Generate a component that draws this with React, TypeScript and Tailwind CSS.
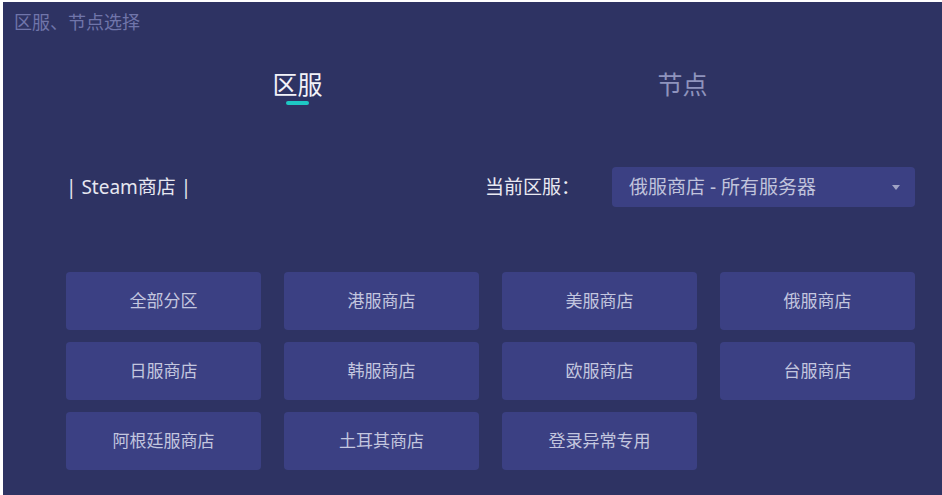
import React, { useState } from "react";

const regions = [
  "全部分区",
  "港服商店",
  "美服商店",
  "俄服商店",
  "日服商店",
  "韩服商店",
  "欧服商店",
  "台服商店",
  "阿根廷服商店",
  "土耳其商店",
  "登录异常专用",
];

const font = { fontFamily: '"Noto Sans", "Noto Sans CJK SC", sans-serif' };

export default function App() {
  const [tab, setTab] = useState<"region" | "node">("region");

  return (
    <div className="w-[942px] h-[495px] bg-white pl-[3px] pt-[2px]" style={font}>
      <div className="h-full bg-[#2e3363] flex flex-col">
        <div className="pl-[11px] pt-[8px] text-[18px] leading-[24px] text-[#7075aa]">
          区服、节点选择
        </div>

        {/* tabs */}
        <div className="ml-[102px] w-[770px] mt-[33px] grid grid-cols-2">
          <button
            onClick={() => setTab("region")}
            className="flex flex-col items-center"
          >
            <span className={`text-[25px] leading-[34px] ${tab === "region" ? "text-[#f2f2f8]" : "text-[#8f93bd]"}`}>
              区服
            </span>
            <span className={`h-[4px] w-[23px] rounded-full ${tab === "region" ? "bg-[#1ec8c4]" : "bg-transparent"}`} />
          </button>
          <button
            onClick={() => setTab("node")}
            className="flex flex-col items-center"
          >
            <span className={`text-[25px] leading-[34px] ${tab === "node" ? "text-[#f2f2f8]" : "text-[#8f93bd]"}`}>
              节点
            </span>
            <span className={`h-[4px] w-[23px] rounded-full ${tab === "node" ? "bg-[#1ec8c4]" : "bg-transparent"}`} />
          </button>
        </div>

        {/* store + current region */}
        <div className="mt-[62px] flex items-center pl-[63px] pr-[27px]">
          <div className="text-[19px] text-[#e6e7f0]">| Steam商店 |</div>
          <div className="ml-auto flex items-center">
            <div className="w-[127px] text-[19px] text-[#e9e9f2]">当前区服：</div>
            <div className="w-[303px] h-[40px] rounded-[4px] bg-[#3b4083] flex items-center pl-[17px] pr-[15px]">
              <span className="text-[19px] text-[#c0c3dc]">俄服商店 - 所有服务器</span>
              <svg className="ml-auto" width="8" height="5" viewBox="0 0 8 5">
                <path d="M0 0h8L4 5z" fill="#a0a3c4" />
              </svg>
            </div>
          </div>
        </div>

        {/* region buttons */}
        <div className="mt-[65px] pl-[63px] pr-[27px] grid grid-cols-4 gap-x-[23px] gap-y-[12px]">
          {regions.map((r) => (
            <button
              key={r}
              className="h-[58px] rounded-[4px] bg-[#3b4083] text-[17px] text-[#c3c6df] flex items-center justify-center"
            >
              {r}
            </button>
          ))}
        </div>
      </div>
    </div>
  );
}
